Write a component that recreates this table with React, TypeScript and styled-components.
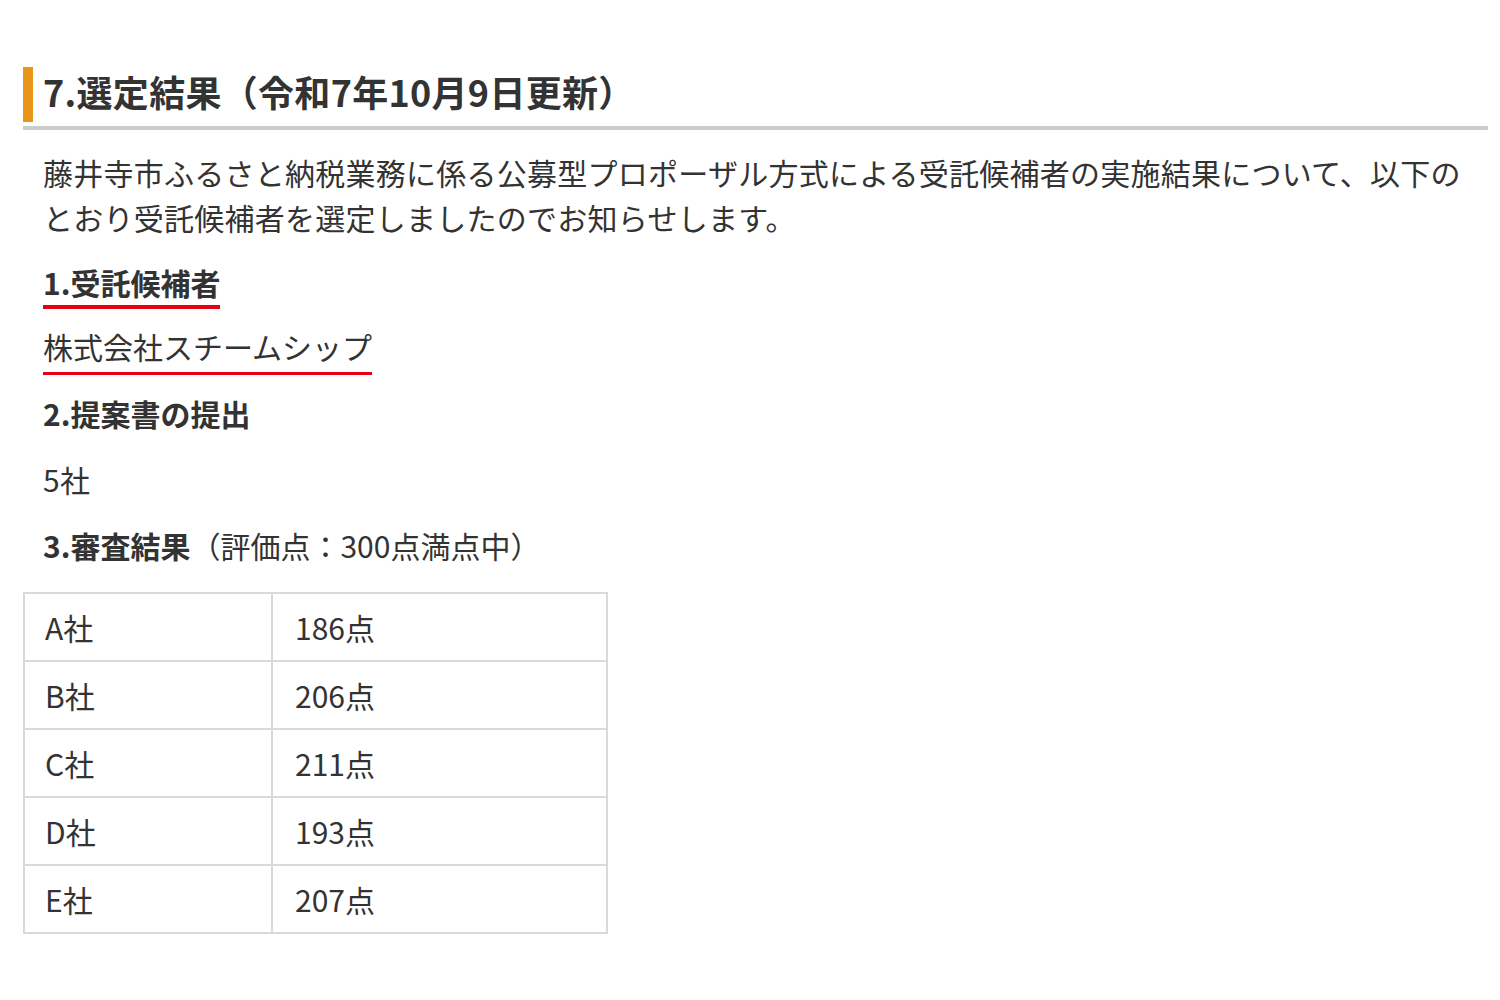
import React from "react";
import styled, {createGlobalStyle} from "styled-components";

const GlobalStyle = createGlobalStyle`
    html, body {
        margin: 0;
        padding: 0;
        background: #fff;
    }

    body {
        font-family: "Noto Sans CJK JP", "Noto Sans", sans-serif;
        color: #333;
    }
`;

const Page = styled.div`
    padding: 67px 12px 40px 23px;
`;

const Heading = styled.h2`
    margin: 0;
    padding-bottom: 4px;
    border-bottom: 4px solid #cccccc;
`;

const HeadingText = styled.span`
    display: block;
    border-left: 10px solid #e8961a;
    padding-left: 10px;
    height: 55px;
    line-height: 49px;
    font-size: 36px;
    font-weight: 700;
    color: #333;
    letter-spacing: 0.3px;
`;

const Body = styled.div`
    padding: 0 20px;
    display: flex;
    flex-direction: column;
    align-items: flex-start;
`;

const Text = styled.p<{ top: number }>`
    margin: ${({top}) => top}px 0 0;
    font-size: 30px;
    line-height: 45px;
    letter-spacing: 0.25px;
    color: #333;
`;

const Label = styled.p<{ top: number; marked?: boolean }>`
    margin: ${({top}) => top}px 0 0;
    font-size: 30px;
    line-height: 45px;
    font-weight: 700;
    color: #333;
    border-bottom: ${({marked}) => (marked ? "4px solid #e60012" : "none")};
`;

const Note = styled.span`
    font-weight: 400;
`;

const Company = styled.p`
    margin: 15px 0 0;
    font-size: 30px;
    line-height: 45px;
    padding-bottom: 3px;
    border-bottom: 3px solid #e60012;
    color: #333;
`;

const ScoreTable = styled.table`
    margin-top: 24px;
    width: 585px;
    border-collapse: collapse;
`;

const Cell = styled.td<{ wide?: boolean }>`
    border: 2px solid #d9d9d9;
    height: 66px;
    padding: 0 ${({wide}) => (wide ? 22 : 20)}px;
    font-size: 30px;
    color: #333;
    width: ${({wide}) => (wide ? "auto" : "206px")};
`;

const scores = [
    {name: "A社", score: "186点"},
    {name: "B社", score: "206点"},
    {name: "C社", score: "211点"},
    {name: "D社", score: "193点"},
    {name: "E社", score: "207点"},
];

const App: React.FC = () => {
    return (
        <Page>
            <GlobalStyle/>
            <Heading>
                <HeadingText>7.選定結果（令和7年10月9日更新）</HeadingText>
            </Heading>
            <Body>
                <Text top={20}>
                    藤井寺市ふるさと納税業務に係る公募型プロポーザル方式による受託候補者の実施結果について、以下のとおり受託候補者を選定しましたのでお知らせします。
                </Text>
                <Label top={20} marked>1.受託候補者</Label>
                <Company>株式会社スチームシップ</Company>
                <Label top={16}>2.提案書の提出</Label>
                <Text top={21}>5社</Text>
                <Label top={21}>3.審査結果<Note>（評価点：300点満点中）</Note></Label>
            </Body>
            <ScoreTable>
                <tbody>
                {scores.map(row => (
                    <tr key={row.name}>
                        <Cell>{row.name}</Cell>
                        <Cell wide>{row.score}</Cell>
                    </tr>
                ))}
                </tbody>
            </ScoreTable>
        </Page>
    );
};

export default App;
